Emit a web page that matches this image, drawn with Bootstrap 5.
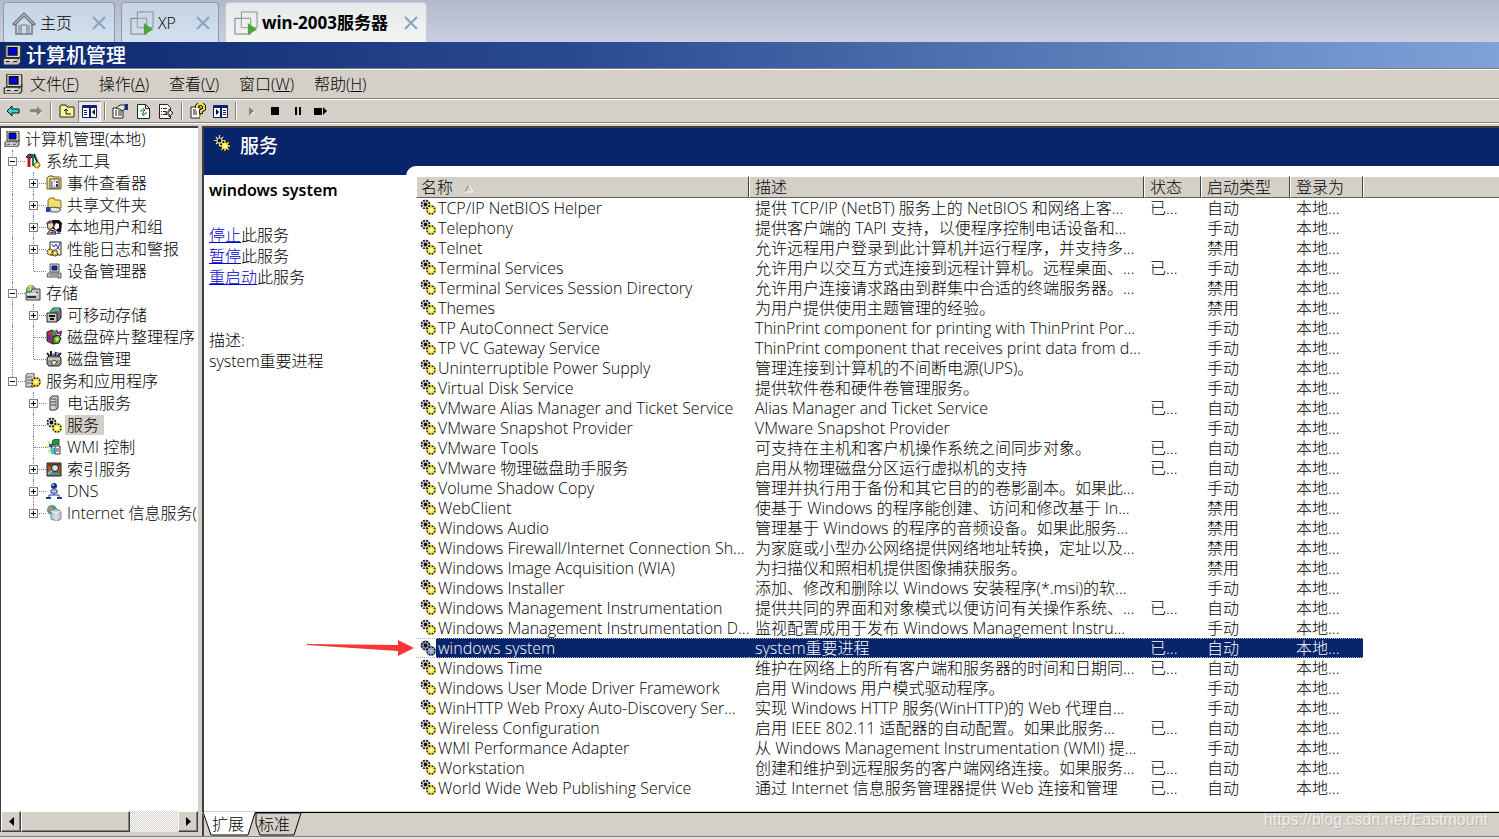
<!DOCTYPE html>
<html lang="zh-CN">
<head>
<meta charset="utf-8">
<meta name="viewport" content="width=device-width, initial-scale=1">
<title>计算机管理</title>
<link href="https://cdn.jsdelivr.net/npm/bootstrap@5.3.0/dist/css/bootstrap.min.css" rel="stylesheet">
<style>
  :root { --face:#d4d0c8; --navy:#08246b; --shade:#808080; --dark:#404040; }
  body { font:300 16px/20px "Open Sans","Noto Sans CJK SC",sans-serif; color:#000; background:var(--face); }
  button { font:inherit; color:inherit; background:none; border:0; padding:0; }
  svg { display:block; flex:none; }
  .lbl { white-space:nowrap; }

  .vm-tabs { height:42px; gap:6px; padding:2px 3px 0; background:linear-gradient(#b3b9cb,#c9cfe0); }
  .vm-tab { height:40px; border:1px solid #8d9ab0; border-bottom:0; border-radius:4px 4px 0 0; background:linear-gradient(#c5d3e4,#d3e0ee); padding:0 8px; }
  .vm-tab.current { background:linear-gradient(#e4e9ea,#f4f5f3); border-color:#c4cbd2; font:700 17px/20px "Noto Sans","Noto Sans CJK SC",sans-serif; }

  .title-strip { height:26px; padding-left:2px; background:linear-gradient(90deg,#0b276f,#2a4a90 38%,#5377b4 68%,#7fa3d8); color:#fff; font:500 20px/26px "Noto Sans CJK SC",sans-serif; }
  .menu-strip { height:31px; padding:0 3px; border-top:1px solid var(--shade); box-shadow:inset 0 1px #fff; border-bottom:1px solid var(--shade); }
  .menu-strip nav { gap:20px; margin-left:7px; }
  .tool-strip { height:24px; padding-left:1px; border-top:1px solid #fff; border-bottom:1px solid var(--shade); }
  .tool { width:23px; height:21px; display:flex; align-items:center; justify-content:center; }
  .tool.down { border:1px solid; border-color:var(--shade) #fff #fff var(--shade); background:#ebe9e4; }
  .divide { width:8px; height:18px; padding-left:3px; }
  .divide::before { content:""; display:block; width:2px; height:18px; border-left:1px solid var(--shade); border-right:1px solid #fff; }

  .workspace { border-top:1px solid #fff; padding-top:2px; min-height:0; }
  .tree-pane { width:198px; margin-bottom:4px; background:#fff; border:solid var(--dark); border-width:2px 0 0 1px; }
  .tree { flex:1 0 auto; overflow:hidden; padding-left:1px; }
  .tree ul { list-style:none; margin:0; padding:0; }
  .node { display:flex; align-items:center; height:22px; }
  .slot { width:21px; height:22px; position:relative; flex:none; }
  .slot.line::before, .slot.last::before { content:""; position:absolute; left:10px; top:0; bottom:0; border-left:1px dotted #848484; }
  .slot.last::before { bottom:11px; }
  .slot.stub::after { content:""; position:absolute; left:11px; right:-2px; top:11px; border-top:1px dotted #848484; }
  .expander { position:absolute; z-index:1; left:6px; top:7px; width:9px; height:9px; border:1px solid var(--shade); background:#fff; }
  .expander::before { content:""; position:absolute; left:1px; top:3px; width:5px; height:1px; background:#000; }
  .expander.plus::after { content:""; position:absolute; left:3px; top:1px; width:1px; height:5px; background:#000; }
  .node svg { margin:0 3px 0 2px; }
  .node .lbl { padding:0 2px; }
  .node .chosen { background:var(--face); padding-right:5px; }

  .bevel { background:var(--face); border:1px solid; border-color:#fff var(--dark) var(--dark) #fff; box-shadow:inset -1px -1px var(--shade); }
  .scroller { height:21px; }
  .scroller .arrow { width:20px; display:flex; align-items:center; justify-content:center; }
  .scroller .thumb { width:109px; }
  .scroller .track { background:repeating-conic-gradient(#fff 0 25%,#d4d0c8 0 50%) 0 0/2px 2px; }

  .detail-pane { margin-left:4px; min-width:0; border-left:2px solid var(--dark); border-top:2px solid var(--dark); background:var(--face); }
  .sheet { background:#fff; border-bottom:1px solid var(--face); }
  .banner { height:47px; padding:3px 0 0 10px; background:var(--navy); color:#fff; }
  .banner h1 { font:500 19px/28px "Noto Sans CJK SC",sans-serif; margin:0 0 0 10px; }
  .info { width:212px; padding:5px; line-height:21px; flex:none; }
  .info h2 { font:600 16px/20px "Noto Sans","Noto Sans CJK SC",sans-serif; margin:0 0 25px; }
  .info p { margin:0 0 42px; }
  .info a { color:#0000d0; }
  .list-wrap { margin:-9px 0 0 -10px; padding:10px 0 0 10px; background:#fff; border-top-left-radius:10px; min-width:0; }
  .services { width:100%; table-layout:fixed; border-collapse:separate; border-spacing:0; }
  .services th { height:22px; padding:0 5px; line-height:19px; font-weight:300; background:var(--face); border:1px solid; border-color:#fff var(--dark) #606060 #fff; white-space:nowrap; }
  .services th:first-child { padding-left:4px; }
  .services th:last-child { border-right:0; }
  .services td { height:20px; padding:0 0 0 6px; line-height:20px; white-space:nowrap; overflow:hidden; }
  .services td:first-child { padding-left:4px; }
  .services td svg { margin:0 2px 2px 0; }
  .services .picked td { color:#fff; background:var(--navy); border:dotted #a9b4cc; border-width:1px 0; line-height:18px; }
  .services .picked td:first-child { background:linear-gradient(90deg,#fff 20px,var(--navy) 20px); }
  .services .picked td:last-child { background:none; border-color:transparent; }
  .services .picked svg { margin-bottom:0; filter:brightness(.6) sepia(1) hue-rotate(180deg); }
  .pointer { position:absolute; left:103px; top:465px; }

  .sheet-tabs { height:24px; padding:0 0 1px 8px; border-top:1px solid #000; }
  .sheet-tabs svg { position:absolute; left:-2px; top:-1px; }
  .sheet-tabs button { position:relative; width:46px; text-align:left; }
  .foot { height:3px; border-top:1px solid var(--shade); background:#e4e1dc; }
  .credit { position:absolute; right:11px; bottom:9px; font:400 16px/20px "Liberation Sans",sans-serif; color:#efedeb; text-shadow:1px 1px #b5b2ac; }
</style>
</head>
<body>
<svg width="0" height="0" class="position-absolute" aria-hidden="true">
  <symbol id="i-pc" viewBox="0 0 16 16"><path d="M3 0h11l1 1v9H3z" fill="#d8d4cc" stroke="#333"/><path d="M5 2h7v6H5z" fill="#0000e0" stroke="#111"/><path d="M1 11h12l2-2v5l-2 2H1z" fill="#c8c4bc" stroke="#333"/><path d="M3 13h3M9 13h3" stroke="#111"/><path d="M2 12h10" stroke="#fff"/></symbol>
  <symbol id="i-gears" viewBox="0 0 16 16">
    <g fill="none">
      <circle cx="5.500" cy="5.500" r="4.800" fill="#111"/>
      <path d="M5.500 0v3M5.500 8v3M0 5.500h3M8 5.500h3" stroke="#ddd" stroke-width="1.200"/>
      <path d="M1.800 1.800l2 2M7 7l2 2M9.200 1.800l-2 2M4 7l-2 2" stroke="#eee" stroke-width="1.200"/>
      <circle cx="5.500" cy="5.500" r="2.500" stroke="#d8d8d8" stroke-width="1.200"/>
      <circle cx="11" cy="11" r="4.800" fill="#1c1a00"/>
      <path d="M11 5.500v3M11 13v3M5.500 11h3M13 11h3" stroke="#f0e640" stroke-width="1.400"/>
      <path d="M7.300 7.300l2 2M12.500 12.500l2.200 2.200M14.700 7.300l-2 2M9.500 12.500l-2.200 2.200" stroke="#f0e640" stroke-width="1.400"/>
      <circle cx="11" cy="11" r="2.500" fill="#fff" stroke="#f0e640" stroke-width="1.500"/>
    </g>
  </symbol>
  <symbol id="i-tools" viewBox="0 0 16 16"><path d="M1 4l3-3 4 1-2 3H3z" fill="#555" stroke="#111"/><path d="M4 5v9" stroke="#c01818" stroke-width="3"/><path d="M8 3v10" stroke="#18804a" stroke-width="2"/><path d="M9 1l5 12" stroke="#111" stroke-width="2"/><path d="M10 2l3 7" stroke="#4878c8"/><circle cx="12" cy="12" r="3" fill="#e2cc38" stroke="#514800" stroke-dasharray="2 1"/><circle cx="12" cy="12" r="1" fill="#fff"/></symbol>
  <symbol id="i-event" viewBox="0 0 16 16"><path d="M1 3l2-2h4l1 1h6l1 1v11H1z" fill="#f3dc7c" stroke="#6f5c18"/><path d="M4 4h9v9H4z" fill="#fff" stroke="#444"/><path d="M6 6v6M8 6h1M8 11h1" stroke="#333"/><path d="M10 6h2v2h-2z" fill="#d02020"/><path d="M10 9h2v3h-2z" fill="#2030c0"/></symbol>
  <symbol id="i-share" viewBox="0 0 16 16"><path d="M2 3l2-2h4l1 2h5l1 1v7H2z" fill="#f4de70" stroke="#806c20"/><path d="M0 10h4v5H0z" fill="#1844b4"/><path d="M4 11l3-1 6 1 2 2-3 2H5z" fill="#e4e4e4" stroke="#555"/></symbol>
  <symbol id="i-users" viewBox="0 0 16 16"><path d="M6 1h7l3 3-1 9h-3l-6-4z" fill="#111"/><path d="M10 4l3 1v4l-3 2-2-3z" fill="#fff"/><path d="M1 4l5-1 2 3-2 4H2z" fill="#ecd6ba" stroke="#333"/><path d="M0 4l4-3 3 2-4 2z" fill="#555"/><path d="M1 15l3-4 5 1 1 3z" fill="#d8d0d0" stroke="#222"/><path d="M3 14l4-2 2 2z" fill="#b03030"/><path d="M10 15l3-3 2 3z" fill="#3b62c8"/></symbol>
  <symbol id="i-perf" viewBox="0 0 16 16"><path d="M4 1h11v13H4z" fill="#fff" stroke="#222"/><path d="M6 3l2 3 2-3 2 4 2-5" fill="none" stroke="#2030d0"/><path d="M9 9l3-2 2 2" fill="none" stroke="#d02828"/><circle cx="4" cy="11" r="3" fill="#e4cf35" stroke="#222" stroke-dasharray="2 1"/><circle cx="9" cy="12" r="3" fill="#c9b42c" stroke="#222" stroke-dasharray="2 1"/><circle cx="4" cy="11" r="1" fill="#fff"/><circle cx="9" cy="12" r="1" fill="#fff"/></symbol>
  <symbol id="i-device" viewBox="0 0 16 16"><path d="M4 1h9v8H4z" fill="#ddd" stroke="#555"/><path d="M6 3h5v4H6z" fill="#0828d8" stroke="#222"/><path d="M2 10h11l2 4H1z" fill="#e4e1db" stroke="#555"/><path d="M3 12h8" stroke="#555"/><path d="M12 10h3v5h-3z" fill="#bbb" stroke="#666"/></symbol>
  <symbol id="i-storage" viewBox="0 0 16 16"><circle cx="6" cy="5" r="4.500" fill="#68cf6c" stroke="#777"/><path d="M6 5L3 1l4-1z" fill="#f1d64a"/><path d="M6 5l4-2v4z" fill="#56bce0"/><circle cx="6" cy="5" r="1" fill="#fff"/><path d="M1 7h5l1-3h8v11H1z" fill="#c6c4c0" stroke="#444"/><path d="M2 12h9M12 7v1" stroke="#333" stroke-width="2"/><path d="M2 9h10" stroke="#fff"/></symbol>
  <symbol id="i-removable" viewBox="0 0 16 16"><path d="M4 5l3-4h7l1 2v8l-3 3z" fill="#777" stroke="#222"/><path d="M4 3l5-2 1 3-5 2z" fill="#45bd52"/><path d="M9 1h4v3H9z" fill="#43acd4"/><path d="M1 6h10v9H1z" fill="#c8c6c2" stroke="#222"/><path d="M3 9h6M4 12h4" stroke="#111" stroke-width="2"/></symbol>
  <symbol id="i-defrag" viewBox="0 0 16 16"><path d="M1 3l5-2 4 3v8l-3 3-6-3z" fill="#c42843" stroke="#222"/><path d="M5 4l4-3 2 4-4 2z" fill="#2f9d4a"/><path d="M10 1l2 3 3-1-1 4" fill="none" stroke="#8a2094" stroke-width="2"/><path d="M7 8l5-2 3 3-2 5-6 1z" fill="#2fae4f" stroke="#222"/><path d="M9 9l3-1 1 3-3 2z" fill="#e3d43b"/><path d="M2 6l3 1v4l-3-1z" fill="#3048c8"/></symbol>
  <symbol id="i-disk" viewBox="0 0 16 16"><path d="M1 2l3 4M5 0v5M10 1l-1 4M15 2l-4 4" stroke="#222" stroke-width="2"/><path d="M7 2v3M12 1v3" stroke="#3050c0"/><path d="M1 7l2-2h10l2 2v6l-2 2H3l-2-2z" fill="#989898" stroke="#222"/><path d="M2 8h12" stroke="#eee"/><path d="M5 11l3-2 3 2-3 4z" fill="#f4f0c0" stroke="#444"/></symbol>
  <symbol id="i-svcapp" viewBox="0 0 16 16"><path d="M1 2l2-2h6v14H1z" fill="#cfcfcf" stroke="#555"/><path d="M2 4h5M2 7h5M2 10h5" stroke="#666"/><path d="M6 12h2v2H6z" fill="#d02020"/><g fill="none"><circle cx="11" cy="9" r="4.800" fill="#1c1a00"/><path d="M11 3.500v3M11 11v3.500M5.500 9h3M13 9h3M7.300 5.300l2 2M12.500 10.500l2.200 2.200M14.700 5.300l-2 2M9.500 10.500l-2.200 2.200" stroke="#ecd63a" stroke-width="1.400"/><circle cx="11" cy="9" r="2.500" fill="#fff" stroke="#ecd63a" stroke-width="1.500"/></g></symbol>
  <symbol id="i-server" viewBox="0 0 16 16"><path d="M4 3l2-2h6v12l-2 2H4z" fill="#d2d2d2" stroke="#333"/><path d="M5 4h5M5 7h5M5 10h5" stroke="#444"/><path d="M10 4v10" stroke="#777"/></symbol>
  <symbol id="i-wmi" viewBox="0 0 16 16"><path d="M2 3l2 2M0 8h3M2 13l2-2" stroke="#ecd64b" stroke-width="2"/><path d="M7 1l6-1v6l-3-1-5 4 1-4z" fill="#25963a" stroke="#155"/><path d="M4 9h5v6H5z" fill="#40c5e0"/><path d="M9 7h5v8H9z" fill="#fff" stroke="#333"/><path d="M10 10h3M10 12h3" stroke="#333"/><path d="M3 5h3v3H3z" fill="#2255c8"/></symbol>
  <symbol id="i-index" viewBox="0 0 16 16"><path d="M1 2h14v13H1z" fill="#b9551c" stroke="#222"/><path d="M2 13h12" stroke="#39b" stroke-width="2"/><path d="M2 4h12" stroke="#222"/><circle cx="9" cy="7" r="3.500" fill="#bfe8fb" stroke="#111"/><path d="M6 10l-4 3" stroke="#6cf" stroke-width="2"/></symbol>
  <symbol id="i-dns" viewBox="0 0 16 16"><circle cx="8" cy="3" r="3" fill="#1c2c90"/><path d="M6 2h2" stroke="#4bd0e0" stroke-width="2"/><path d="M5 7h6v3H5z" fill="#dce4ff" stroke="#223a9a"/><path d="M8 10v2M3 14v-2h10v2" fill="none" stroke="#223a9a"/><path d="M0 15h5M11 15h5" stroke="#223a9a" stroke-width="2"/></symbol>
  <symbol id="i-iis" viewBox="0 0 16 16"><circle cx="6" cy="5" r="5" fill="#2d9fb5"/><path d="M2 3l3-2 2 3-3 3z" fill="#d18b45"/><path d="M5 6l4-2 6 2v8l-4 2-6-2z" fill="#c6cdd2" stroke="#7d858b"/><path d="M10 8v8M5 6l5 2 5-2" fill="none" stroke="#f2f4f5"/></symbol>
  <symbol id="i-vm" viewBox="0 0 26 26"><path d="M8 1h17v17H8z" fill="none" stroke="#888"/><path d="M1 8h17v17H1z" fill="none" stroke="#777"/><path d="M8 8h10v10H8z" fill="none" stroke="#aaa"/><path d="M15 13v13l10-6z" fill="#4aa53c"/></symbol>
  <symbol id="i-close" viewBox="0 0 14 14"><path d="M1 1l12 12M13 1L1 13" stroke="#87a3bd" stroke-width="2"/></symbol>
</svg>
<div class="min-vh-100 d-flex flex-column overflow-hidden position-relative">
  <header>
    <div class="vm-tabs d-flex">
      <div class="vm-tab d-flex align-items-center">
        <svg width="24" height="24" viewBox="0 0 24 24" fill="none" stroke="#707780" stroke-width="1.500"><path d="M1 13L12 2l11 11-2 1L12 5l-9 9z" fill="#eee"/><path d="M4 13v10h16V13"/><path d="M9 22v-8h6v8M7 22v-8M17 14v8" stroke-width="1"/></svg>
        <span class="lbl mx-1 pe-3">主页</span>
        <button aria-label="关闭 主页"><svg width="14" height="14"><use href="#i-close"/></svg></button>
      </div>
      <div class="vm-tab d-flex align-items-center">
        <svg width="24" height="24"><use href="#i-vm"/></svg>
        <span class="lbl ms-1 me-3 pe-1">XP</span>
        <button aria-label="关闭 XP"><svg width="14" height="14"><use href="#i-close"/></svg></button>
      </div>
      <div class="vm-tab current d-flex align-items-center">
        <svg width="24" height="24"><use href="#i-vm"/></svg>
        <span class="lbl ms-1 me-3">win-2003服务器</span>
        <button aria-label="关闭 win-2003服务器"><svg width="14" height="14"><use href="#i-close"/></svg></button>
      </div>
    </div>
    <div class="title-strip d-flex align-items-center"><svg width="20" height="20"><use href="#i-pc"/></svg><span class="lbl ms-1">计算机管理</span></div>
    <div class="menu-strip d-flex align-items-center">
      <svg width="20" height="20"><use href="#i-pc"/></svg>
      <nav class="d-flex">
        <button>文件(<u>F</u>)</button><button>操作(<u>A</u>)</button><button>查看(<u>V</u>)</button><button>窗口(<u>W</u>)</button><button>帮助(<u>H</u>)</button>
      </nav>
    </div>
    <div class="tool-strip d-flex align-items-center" role="toolbar">
      <button class="tool" aria-label="后退"><svg width="14" height="12" viewBox="0 0 14 12"><path d="M1 6l5-5v3h7v4H6v3z" fill="#30d0d8" stroke="#111"/></svg></button>
      <button class="tool" aria-label="前进"><svg width="14" height="12" viewBox="0 0 14 12"><path d="M13 6L8 1v3H1v4h7v3z" fill="#868686"/><path d="M13 7l-5 5M1 8h6" stroke="#fff"/></svg></button>
      <span class="divide"></span>
      <button class="tool" aria-label="上一级"><svg width="16" height="14" viewBox="0 0 16 14"><path d="M1 3l1-2h5l1 2h7v10H1z" fill="#fff59a" stroke="#222"/><path d="M7 5v5h5M5 7l2-2 2 2" fill="none" stroke="#111"/></svg></button>
      <button class="tool down" aria-label="控制台树"><svg width="15" height="13" viewBox="0 0 15 13"><path d="M.5.500h14v12H.500z" fill="#fff" stroke="#0a1f7c"/><path d="M1 2h13M8 1v11" stroke="#0a1f7c" stroke-width="2"/><path d="M2 5.500h3M2 7.500h3M2 9.500h3" stroke="#222"/><path d="M13 4v6l-3-3z"/></svg></button>
      <span class="divide"></span>
      <button class="tool" aria-label="属性"><svg width="17" height="15" viewBox="0 0 17 15"><path d="M1 4h10v10H1z" fill="#fff" stroke="#222"/><path d="M3 7h2M6 7h4M3 9h2M6 9h4M3 11h2M6 11h4" stroke="#222"/><path d="M4 4l4-3h5v4l-3 2-2-2H6z" fill="#e8e8e8" stroke="#222"/><path d="M13 0h3v6h-3z" fill="#1a2c86"/></svg></button>
      <button class="tool" aria-label="刷新"><svg width="13" height="15" viewBox="0 0 13 15"><path d="M.5.500h8l4 4v10H.500z" fill="#fff" stroke="#222"/><path d="M8.500.500v4h4" fill="none" stroke="#222"/><path d="M4 8V6h4M6 4l2 2-2 2M9 8v2H5M7 12l-2-2 2-2" fill="none" stroke="#128438"/></svg></button>
      <button class="tool" aria-label="导出列表"><svg width="15" height="15" viewBox="0 0 15 15"><path d="M.5.500h8l3 3v11H.500z" fill="#fff" stroke="#222"/><path d="M2 4.500h1M4 4.500h4M2 7.500h1M4 7.500h3M2 10.500h1M4 10.500h4" stroke="#222"/><path d="M7 8h3V5l4 4-4 4v-3H7z" fill="#d8d8d8" stroke="#222"/></svg></button>
      <span class="divide"></span>
      <button class="tool" aria-label="帮助"><svg width="16" height="16" viewBox="0 0 16 16"><path d="M1 4h9v11H1z" fill="#fff" stroke="#222"/><path d="M3 7h3M3 9h4M3 11h4" stroke="#222"/><path d="M7 5V3l2-2h3l2 2v3l-3 2v3" fill="none" stroke="#222" stroke-width="4"/><path d="M7 5V3l2-2h3l2 2v3l-3 2v2M11 13v2" fill="none" stroke="#f3e330" stroke-width="2"/></svg></button>
      <button class="tool" aria-label="操作窗格"><svg width="15" height="13" viewBox="0 0 15 13"><path d="M.5.500h14v12H.500z" fill="#fff" stroke="#0a1f7c"/><path d="M1 2h13M8 1v11" stroke="#0a1f7c" stroke-width="2"/><path d="M10 5.500h3M10 7.500h3M10 9.500h3" stroke="#222"/><path d="M3 4v6l3-3z"/></svg></button>
      <span class="divide"></span>
      <button class="tool" aria-label="启动"><svg width="8" height="11" viewBox="0 0 8 11"><path d="M2 1v9l5-4z" fill="#fff"/><path d="M1 1v9l5-5z" fill="#858585"/></svg></button>
      <button class="tool" aria-label="停止"><svg width="8" height="8"><path d="M0 0h8v8H0z"/></svg></button>
      <button class="tool" aria-label="暂停"><svg width="6" height="8"><path d="M0 0h2v8H0zM4 0h2v8H4z"/></svg></button>
      <button class="tool" aria-label="重新启动"><svg width="14" height="8"><path d="M0 1h8v7H0zM9 0l4 4-4 4z"/></svg></button>
    </div>
  </header>

  <main class="workspace flex-grow-1 d-flex">
    <aside class="tree-pane d-flex flex-column flex-shrink-0">
      <div class="tree"><ul id="tree"></ul></div>
      <div class="scroller d-flex">
        <button class="bevel arrow" aria-label="向左滚动"><svg width="5" height="9"><path d="M5 0v9L0 4.500z"/></svg></button>
        <div class="bevel thumb"></div>
        <div class="track flex-grow-1"></div>
        <button class="bevel arrow" aria-label="向右滚动"><svg width="5" height="9"><path d="M0 0v9l5-4.500z"/></svg></button>
      </div>
    </aside>

    <section class="detail-pane flex-grow-1 d-flex flex-column">
      <div class="sheet flex-grow-1">
        <div class="banner d-flex align-items-start"><svg class="mt-1" width="16" height="16"><use href="#i-gears"/></svg><h1>服务</h1></div>
        <div class="d-flex position-relative">
          <div class="info">
            <h2>windows system</h2>
            <p><a href="#">停止</a>此服务<br><a href="#">暂停</a>此服务<br><a href="#">重启动</a>此服务</p>
            <div>描述:<br>system重要进程</div>
          </div>
          <div class="list-wrap flex-grow-1">
            <table class="services">
              <colgroup><col style="width:333px"><col style="width:395px"><col style="width:57px"><col style="width:89px"><col style="width:73px"><col></colgroup>
              <thead><tr><th>名称<svg class="d-inline-block ms-2" width="14" height="9" viewBox="-4 0 14 9" aria-hidden="true"><path d="M0 8l4-7" stroke="#808080"/><path d="M4 1l4 7H0" fill="none" stroke="#fff"/></svg></th><th>描述</th><th>状态</th><th>启动类型</th><th>登录为</th><th></th></tr></thead>
              <tbody id="rows"></tbody>
            </table>
          </div>
          <svg class="pointer" width="108" height="17" viewBox="0 0 108 17" aria-hidden="true"><path d="M0 4l91 1V0l16 8-16 8v-5L0 5z" fill="#fb3434"/></svg>
        </div>
      </div>
      <div class="sheet-tabs d-flex position-relative">
        <svg width="104" height="24" viewBox="0 0 104 24" aria-hidden="true"><path d="M54 1h45l-7 22H58l-4-11z" fill="#d4d0c8" stroke="#000"/><path d="M0 0h53l-7 23H9z" fill="#fff"/><path d="M1 0l8 23h37l7-22" fill="none" stroke="#000"/></svg>
        <button>扩展</button><button>标准</button>
      </div>
    </section>
  </main>
  <div class="foot"></div>
  <div class="credit">https://blog.csdn.net/Eastmount</div>
</div>

<script src="https://cdn.jsdelivr.net/npm/bootstrap@5.3.0/dist/js/bootstrap.bundle.min.js"></script>
<script>
  // Each tree node: guide slots, icon, label. Slot codes: | line, L last, _ blank; + and - add an expander.
  const tree = [
    ['', 'pc', '计算机管理(本地)'],
    ['|-', 'tools', '系统工具'],
    ['| |+', 'event', '事件查看器'], ['| |+', 'share', '共享文件夹'], ['| |+', 'users', '本地用户和组'], ['| |+', 'perf', '性能日志和警报'], ['| L', 'device', '设备管理器'],
    ['|-', 'storage', '存储'],
    ['| |+', 'removable', '可移动存储'], ['| |', 'defrag', '磁盘碎片整理程序'], ['| L', 'disk', '磁盘管理'],
    ['L-', 'svcapp', '服务和应用程序'],
    ['_ |+', 'server', '电话服务'], ['_ |', 'gears', '服务', 1], ['_ |', 'wmi', 'WMI 控制'], ['_ |+', 'index', '索引服务'], ['_ |+', 'dns', 'DNS'], ['_ L+', 'iis', 'Internet 信息服务(']
  ];
  const icon = n => `<svg width="16" height="16" aria-hidden="true"><use href="#i-${n}"/></svg>`;
  document.getElementById('tree').innerHTML = tree.map(([guide, pic, text, chosen]) => {
    const parts = guide ? guide.split(' ') : [];
    const slots = parts.map((p, i) => {
      const kind = { '|': 'line', 'L': 'last', '_': '' }[p[0]];
      const stub = i === parts.length - 1 ? 'stub' : '';
      const box = p[1] ? `<i class="expander ${p[1] === '+' ? 'plus' : ''}"></i>` : '';
      return `<span class="slot ${kind} ${stub}">${box}</span>`;
    }).join('');
    return `<li class="node">${slots}${icon(pic)}<span class="lbl ${chosen ? 'chosen' : ''}">${text}</span></li>`;
  }).join('');

  // name | description | started | start type
  const services = `TCP/IP NetBIOS Helper|提供 TCP/IP (NetBT) 服务上的 NetBIOS 和网络上客...|1|自动
Telephony|提供客户端的 TAPI 支持，以便程序控制电话设备和...||手动
Telnet|允许远程用户登录到此计算机并运行程序，并支持多...||禁用
Terminal Services|允许用户以交互方式连接到远程计算机。远程桌面、...|1|手动
Terminal Services Session Directory|允许用户连接请求路由到群集中合适的终端服务器。...||禁用
Themes|为用户提供使用主题管理的经验。||禁用
TP AutoConnect Service|ThinPrint component for printing with ThinPrint Por...||手动
TP VC Gateway Service|ThinPrint component that receives print data from d...||手动
Uninterruptible Power Supply|管理连接到计算机的不间断电源(UPS)。||手动
Virtual Disk Service|提供软件卷和硬件卷管理服务。||手动
VMware Alias Manager and Ticket Service|Alias Manager and Ticket Service|1|自动
VMware Snapshot Provider|VMware Snapshot Provider||手动
VMware Tools|可支持在主机和客户机操作系统之间同步对象。|1|自动
VMware 物理磁盘助手服务|启用从物理磁盘分区运行虚拟机的支持|1|自动
Volume Shadow Copy|管理并执行用于备份和其它目的的卷影副本。如果此...||手动
WebClient|使基于 Windows 的程序能创建、访问和修改基于 In...||禁用
Windows Audio|管理基于 Windows 的程序的音频设备。如果此服务...||禁用
Windows Firewall/Internet Connection Sh...|为家庭或小型办公网络提供网络地址转换，定址以及...||禁用
Windows Image Acquisition (WIA)|为扫描仪和照相机提供图像捕获服务。||禁用
Windows Installer|添加、修改和删除以 Windows 安装程序(*.msi)的软...||手动
Windows Management Instrumentation|提供共同的界面和对象模式以便访问有关操作系统、...|1|自动
Windows Management Instrumentation D...|监视配置成用于发布 Windows Management Instru...||手动
windows system|system重要进程|1|自动
Windows Time|维护在网络上的所有客户端和服务器的时间和日期同...|1|自动
Windows User Mode Driver Framework|启用 Windows 用户模式驱动程序。||手动
WinHTTP Web Proxy Auto-Discovery Ser...|实现 Windows HTTP 服务(WinHTTP)的 Web 代理自...||手动
Wireless Configuration|启用 IEEE 802.11 适配器的自动配置。如果此服务...|1|自动
WMI Performance Adapter|从 Windows Management Instrumentation (WMI) 提...||手动
Workstation|创建和维护到远程服务的客户端网络连接。如果服务...|1|自动
World Wide Web Publishing Service|通过 Internet 信息服务管理器提供 Web 连接和管理|1|自动`;
  document.getElementById('rows').innerHTML = services.split('\n').map(line => {
    const [name, desc, on, start] = line.split('|');
    return `<tr class="${name === 'windows system' ? 'picked' : ''}"><td><div class="d-flex align-items-center">${icon('gears')}<span>${name}</span></div></td><td>${desc}</td><td>${on ? '已...' : ''}</td><td>${start}</td><td>本地...</td><td></td></tr>`;
  }).join('');
</script>
</body>
</html>
